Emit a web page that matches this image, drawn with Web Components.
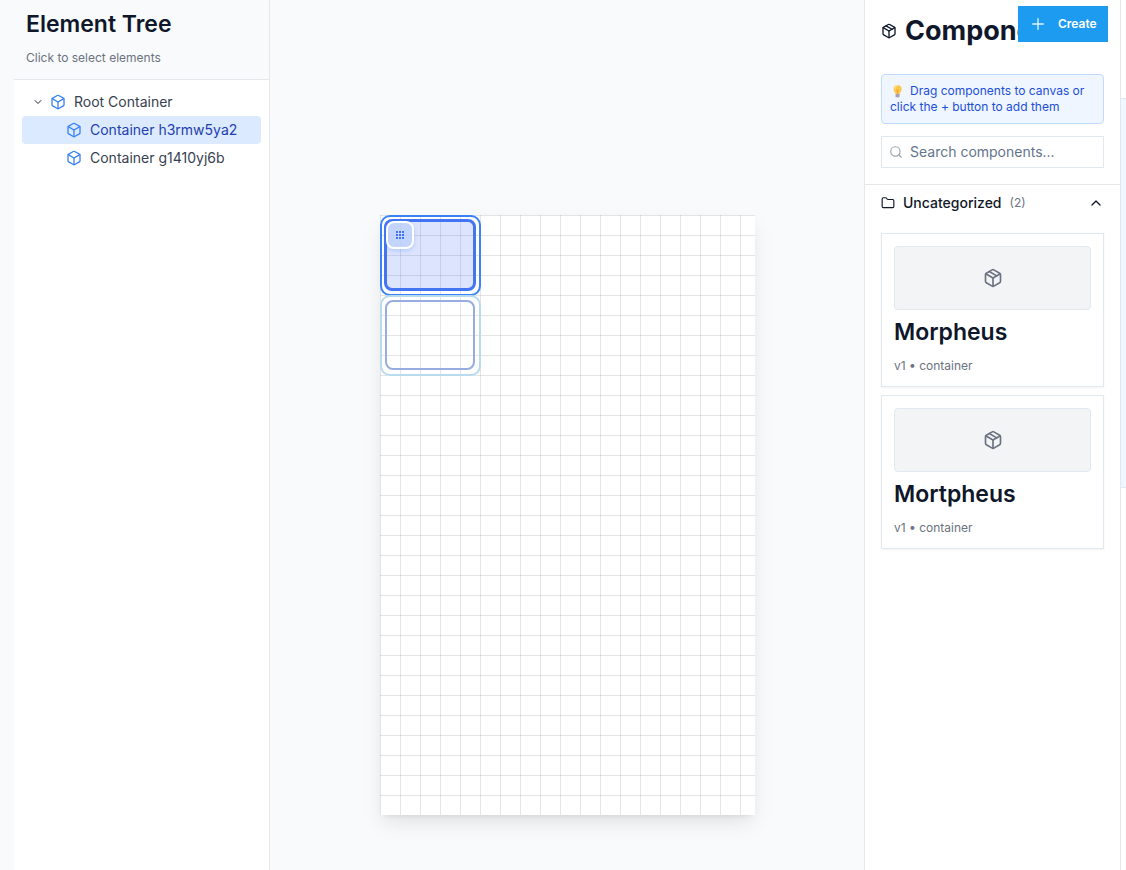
<!DOCTYPE html>
<html lang="en">
<head>
<meta charset="utf-8">
<meta name="viewport" content="width=device-width, initial-scale=1">
<title>Page builder</title>
<style>
  html, body { margin: 0; min-height: 100%; }
  body { font-family: Inter, "Liberation Sans", sans-serif; font-size: 14px; line-height: 20px; color: #374151; background: #f9fafb; }
</style>
</head>
<body>
<builder-app>
  <element-tree slot="tree">
    <tree-item expanded>Root Container</tree-item>
    <tree-item level="1" selected>Container h3rmw5ya2</tree-item>
    <tree-item level="1">Container g1410yj6b</tree-item>
  </element-tree>
  <design-canvas slot="canvas">
    <canvas-node selected style="--col:0;--row:0"></canvas-node>
    <canvas-node style="--col:0;--row:4"></canvas-node>
  </design-canvas>
  <component-library slot="library">
    <component-card name="Morpheus">v1 • container</component-card>
    <component-card name="Mortpheus">v1 • container</component-card>
  </component-library>
</builder-app>

<script>
const ICONS = {
  box: '<path d="M21 16V8a2 2 0 0 0-1-1.73l-7-4a2 2 0 0 0-2 0l-7 4A2 2 0 0 0 3 8v8a2 2 0 0 0 1 1.73l7 4a2 2 0 0 0 2 0l7-4A2 2 0 0 0 21 16z"/><path d="m3.3 7 8.7 5 8.7-5"/><path d="M12 22V12"/>',
  package: '<path d="m7.5 4.27 9 5.15"/><path d="M21 8a2 2 0 0 0-1-1.73l-7-4a2 2 0 0 0-2 0l-7 4A2 2 0 0 0 3 8v8a2 2 0 0 0 1 1.73l7 4a2 2 0 0 0 2 0l7-4A2 2 0 0 0 21 16Z"/><path d="m3.3 7 8.7 5 8.7-5"/><path d="M12 22V12"/>',
  down: '<path d="m6 9 6 6 6-6"/>',
  up: '<path d="m18 15-6-6-6 6"/>',
  plus: '<path d="M4 12h16M12 4v16"/>',
  search: '<circle cx="11" cy="11" r="8"/><path d="m21 21-4.3-4.3"/>',
  folder: '<path d="M20 20a2 2 0 0 0 2-2V8a2 2 0 0 0-2-2h-7.9a2 2 0 0 1-1.69-.9L9.6 3.9A2 2 0 0 0 7.93 3H4a2 2 0 0 0-2 2v13a2 2 0 0 0 2 2Z"/>',
  bulb: '<g stroke="none"><path fill="#fcc84a" d="M13 2a7 7 0 0 0-7 7c0 3.500 3 5 3.500 8h7c.5-3 3.500-4.500 3.500-8a7 7 0 0 0-7-7z"/><path fill="#ffe9a0" d="M10 4c-2 1.500-2.500 4-2 6 1 .5 2-4 4-6z"/><path fill="#f5a030" d="M10.500 10l1.500 1.500v5h2v-5l1.500-1.500-1-1-1.500 1.500-1.500-1.500z"/><path fill="#a9a3b5" d="M9.500 17h7v4l-2 2h-3l-2-2z"/></g>'
};
const define = (name, html, setup) => customElements.define(name, class extends HTMLElement {
  connectedCallback() {
    if (this.shadowRoot) return;
    const template = document.createElement('template');
    template.innerHTML = '<style>*{box-sizing:border-box}:host{display:block;box-sizing:border-box}</style>' + html;
    this.attachShadow({ mode: 'open' }).append(template.content.cloneNode(true));
    setup?.(this, this.shadowRoot);
  }
});

define('ui-icon', `<style>
  :host{display:inline-block;flex:none;width:var(--size,16px);height:var(--size,16px)}
  svg{display:block;width:100%;height:100%;fill:none;stroke:currentColor;stroke-width:2;stroke-linecap:round;stroke-linejoin:round}
</style><svg viewBox="0 0 24 24" aria-hidden="true"></svg>`,
(host, root) => { root.querySelector('svg').innerHTML = ICONS[host.getAttribute('name')]; });

define('builder-app', `<style>
  :host{display:grid;grid-template-columns:256px minmax(0,1fr) 256px 6px;min-height:100vh;padding-left:14px}
  .next{border-left:1px solid #e5e7eb;background:#fff;padding-top:98px}
  .strip{height:390px;background:#eff6ff;border-block:1px solid #e2e8f0}
</style><slot name="tree"></slot><slot name="canvas"></slot><slot name="library"></slot>
<div class="next"><div class="strip"></div></div>`);

define('element-tree', `<style>
  :host{background:#fff;border-right:1px solid #e5e7eb}
  header{height:80px;padding:8px 12px;background:#f9fafb;border-bottom:1px solid #e5e7eb}
  h2{margin:0;font-size:23px;line-height:32px;font-weight:600;color:#0f172a}
  p{margin:8px 0 0;font-size:12px;line-height:20px;color:#6b7280}
  nav{padding:8px}
</style><header><h2>Element Tree</h2><p>Click to select elements</p></header><nav><slot></slot></nav>`);

define('tree-item', `<style>
  button{display:flex;align-items:center;gap:8px;width:100%;height:28px;padding:0 8px;border:0;border-radius:4px;background:none;font:inherit;color:#374151;text-align:left}
  :host([level="1"]) button{padding-left:24px}
  :host([selected]) button{background:#dbeafe;color:#1e40af}
  .toggle{display:flex;width:16px;justify-content:center;--size:12px;color:#1f2937;margin-right:-4px}
  .kind{color:#3b82f6}
</style><button type="button"><span class="toggle"></span><ui-icon class="kind" name="box"></ui-icon><slot></slot></button>`,
(host, root) => { if (host.hasAttribute('expanded')) root.querySelector('.toggle').innerHTML = '<ui-icon name="down"></ui-icon>'; });

define('design-canvas', `<style>
  :host{padding-top:215px;background:#f9fafb}
  .page{position:relative;width:375px;height:600px;margin:0 auto;background-color:#fff;
    background-image:linear-gradient(rgba(0,0,0,.1) 1px,transparent 1px),linear-gradient(90deg,rgba(0,0,0,.1) 1px,transparent 1px);background-size:20px 20px;
    box-shadow:0 10px 20px -3px rgba(0,0,0,.1),0 4px 6px -4px rgba(0,0,0,.1)}
</style><div class="page"><slot></slot></div>`);

define('canvas-node', `<style>
  :host{position:absolute;left:calc(var(--col)*20px);top:calc(var(--row)*20px);width:101px;height:81px;padding:3px 4px 4px 3px;border:2px solid #b8dcee;border-radius:10px}
  .body{height:100%;border:2px solid #97addf;border-radius:8px}
  :host([selected]){border-color:#3b82f6;padding:2px 3px 3px 2px}
  :host([selected]) .body{border:3px solid #4375f2;background:rgba(65,105,250,.18)}
  button{display:none;position:absolute;left:4px;top:4px;width:28px;height:28px;padding:0;border:2px solid #fff;border-radius:8px;background:rgba(190,209,253,.8);box-shadow:0 2px 4px rgba(59,130,246,.25);align-items:center;justify-content:center}
  :host([selected]) button{display:flex}
  svg{width:8px;height:8px;fill:#4375f2}
</style><div class="body"></div><button type="button" aria-label="Drag element"><svg viewBox="0 0 8 8"><path d="M0 0h2v2H0zM3 0h2v2H3zM6 0h2v2H6zM0 3h2v2H0zM3 3h2v2H3zM6 3h2v2H6zM0 6h2v2H0zM3 6h2v2H3zM6 6h2v2H6z"/></svg></button>`);

define('component-library', `<style>
  :host{position:relative;background:#fff;border-left:1px solid #e5e7eb}
  header{padding:12px 16px 16px;border-bottom:1px solid #e5e7eb}
  .title{display:flex;align-items:center;gap:8px;height:38px;margin-right:86px;color:#0f172a}
  h1{flex:1;min-width:0;overflow:hidden;margin:0;font-size:27px;line-height:36px;font-weight:700}
  .create{position:absolute;top:6px;right:12px;display:flex;align-items:center;gap:12px;width:90px;height:36px;padding:0 12px;border:0;background:#1d9bf0;color:#fff;font:600 12px/20px Inter,sans-serif}
  .create ui-icon{--size:16px}
  .create ui-icon{color:#e0f2fe}
  .hint{margin:24px 0 12px;padding:8px;border:1px solid #bfdbfe;border-radius:4px;background:#eff6ff;color:#1d4ed8;font-size:12px;line-height:16px}
  .hint ui-icon{--size:14px;vertical-align:-3px;margin-right:6px}
  .search{display:flex;align-items:center;gap:7px;height:32px;padding:0 7px;border:1px solid #e2e8f0;color:#9ca3af;--size:14px}
  input{flex:1;min-width:0;padding:0;border:0;outline:0;background:none;font:inherit;color:#0f172a}
  input::placeholder{color:#64748b;opacity:1}
  .group{display:flex;align-items:center;gap:8px;width:100%;height:36px;padding:0 16px;border:0;background:none;font:500 14px/20px Inter,sans-serif;color:#111827;--size:14px}
  .count{font-size:12px;font-weight:400;color:#6b7280}
  .arrow{--size:16px;margin-left:auto}
  .cards{display:grid;gap:8px;padding:12px 16px}
</style>
<header><div class="title"><ui-icon name="package"></ui-icon><h1>Components</h1></div>
<p class="hint"><ui-icon name="bulb"></ui-icon>Drag components to canvas or click the + button to add them</p>
<label class="search"><ui-icon name="search"></ui-icon><input type="text" aria-label="Search components" placeholder="Search components..."></label></header>
<button class="create" type="button"><ui-icon name="plus"></ui-icon>Create</button>
<button class="group" type="button"><ui-icon name="folder"></ui-icon><span>Uncategorized</span><span class="count">(2)</span><ui-icon class="arrow" name="up"></ui-icon></button>
<div class="cards"><slot></slot></div>`);

define('component-card', `<style>
  :host{height:154px;padding:12px;border:1px solid #e2e8f0;background:#fff;box-shadow:0 1px 2px rgba(0,0,0,.05)}
  .preview{display:flex;align-items:center;justify-content:center;height:64px;border:1px solid #e2e8f0;border-radius:4px;background:#f3f4f6;color:#6b7280;--size:20px}
  h3{margin:6px 0 10px;font-size:23px;line-height:32px;font-weight:600;color:#0f172a}
  p{margin:0;font-size:12px;line-height:16px;color:#6b7280}
</style><div class="preview"><ui-icon name="package"></ui-icon></div><h3></h3><p><slot></slot></p>`,
(host, root) => { root.querySelector('h3').textContent = host.getAttribute('name'); });
</script>
</body>
</html>
